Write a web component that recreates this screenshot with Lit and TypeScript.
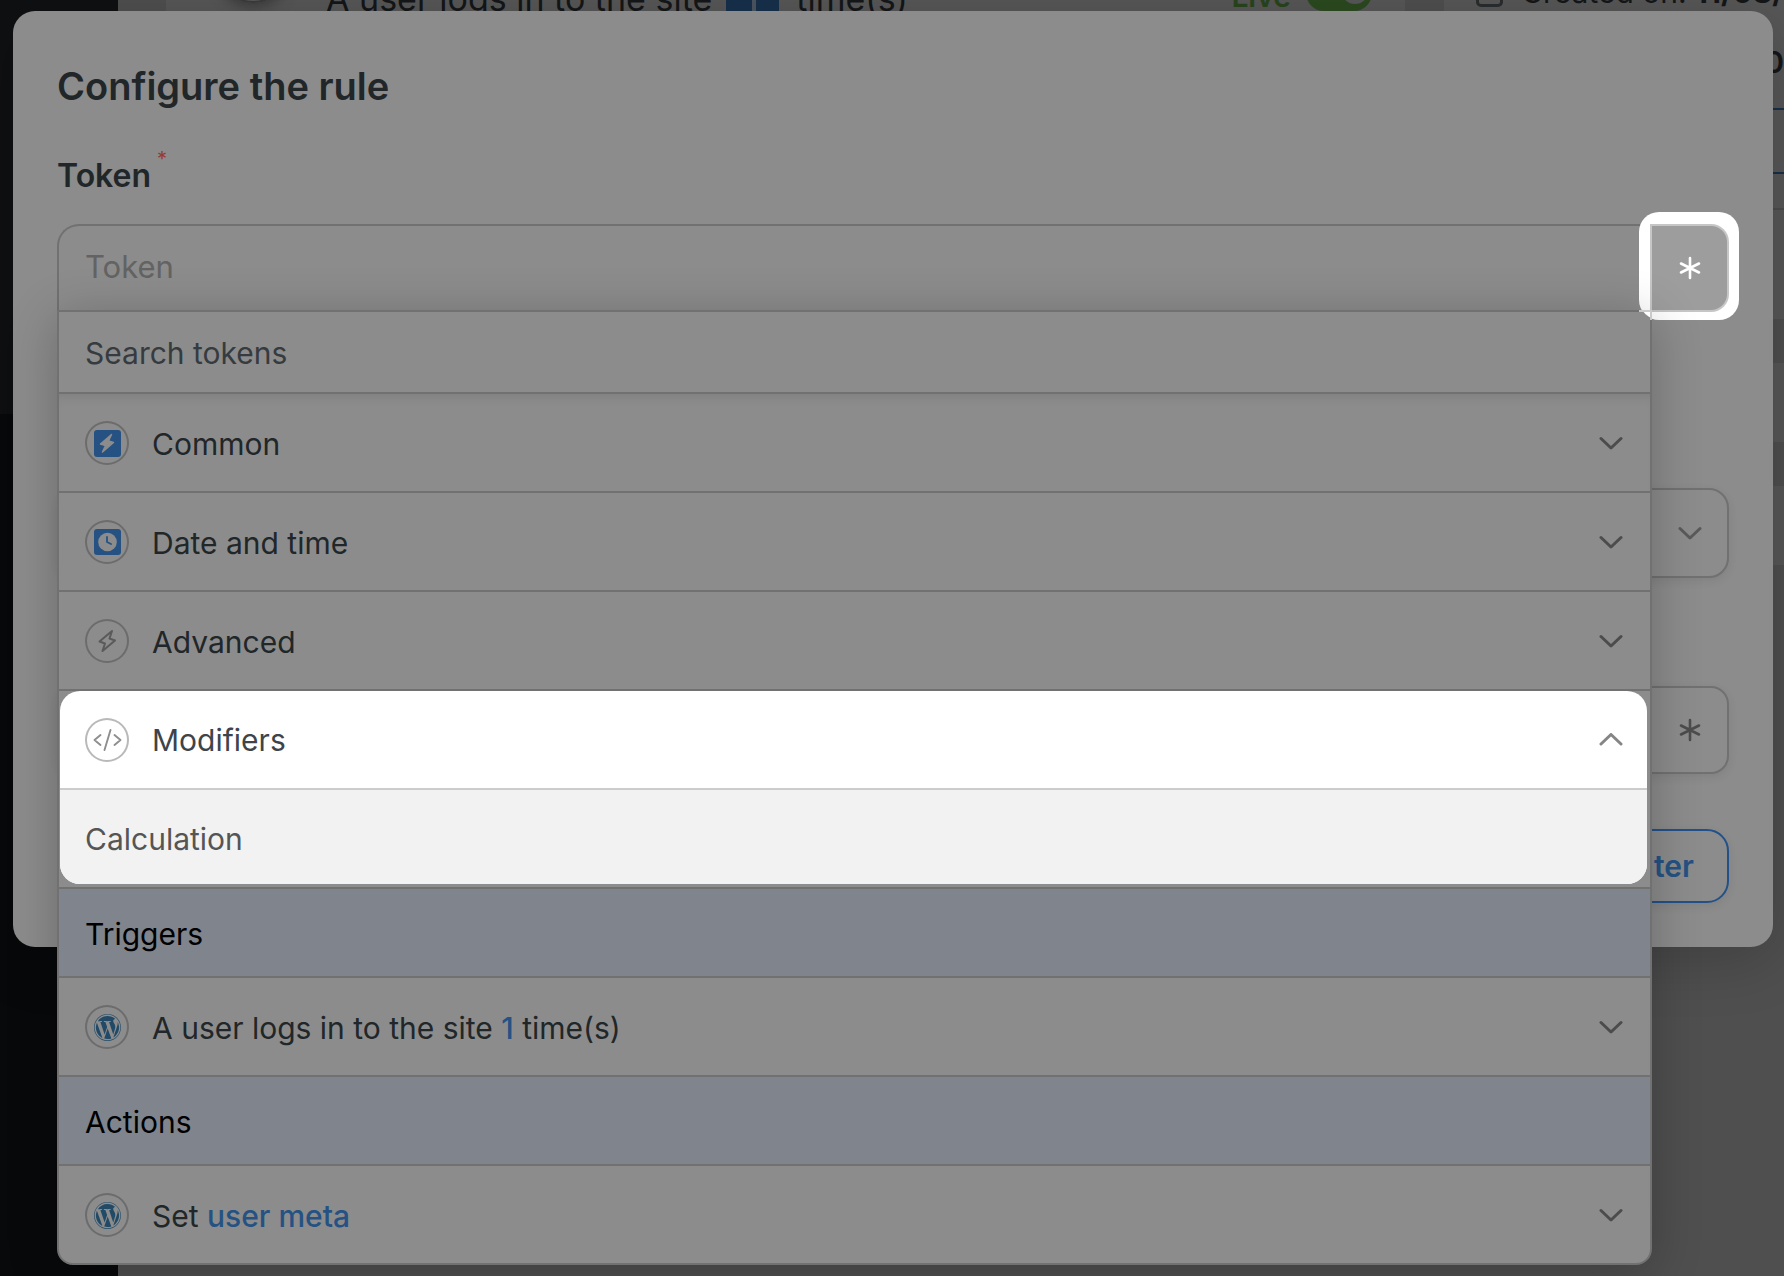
import { LitElement, html, css, svg } from "lit";
import { customElement } from "lit/decorators.js";

const chevronDown = html`<svg class="chev" viewBox="0 0 24 14" width="24" height="14" aria-hidden="true"><path d="M2 2.500 L12 12 L22 2.500" /></svg>`;
const chevronUp = html`<svg class="chev" viewBox="0 0 24 14" width="24" height="14" aria-hidden="true"><path d="M2 11 L12 1.500 L22 11" /></svg>`;
const asterisk = html`<svg class="ast" viewBox="0 0 24 24" width="24" height="24" aria-hidden="true"><path d="M12 2 V22 M3 7.500 L21 16.500 M21 7.500 L3 16.500" /></svg>`;

const icons = {
  common: svg`<rect x="9" y="9" width="27" height="27" rx="3" fill="#255283"/><path d="M26.500 13.500 L15.500 23 L20.500 24.500 L17.500 31 L28.500 21.500 L23.500 20 Z" fill="#8c8c8c" stroke="#8c8c8c" stroke-width="1.500" stroke-linejoin="round"/>`,
  date: svg`<rect x="9" y="9" width="27" height="26" rx="3" fill="#255283"/><circle cx="22.500" cy="22" r="9.300" fill="#8c8c8c"/><path d="M22 17 V22 L26 24" fill="none" stroke="#255283" stroke-width="1.800" stroke-linecap="round" stroke-linejoin="round"/>`,
  advanced: svg`<path d="M27 12 L14.500 22.500 L20 24.500 L17.500 32 L30 21.500 L24.500 19.500 Z" fill="none" stroke="#5a5a5a" stroke-width="2" stroke-linejoin="round"/>`,
  modifiers: svg`<path d="M15.500 17 L9.500 22 L15.500 27 M29.500 17 L35.500 22 L29.500 27 M25.500 12 L19.500 32" fill="none" stroke="#8e8e8e" stroke-width="1.900" stroke-linecap="round" stroke-linejoin="round"/>`,
  wordpress: svg`<g transform="translate(9 9) scale(0.220)" fill="#214a66"><path d="M8.708 61.260c0 20.802 12.089 38.779 29.619 47.298L13.258 39.872c-2.916 6.536-4.550 13.769-4.550 21.388zM96.740 58.608c0-6.495-2.333-10.993-4.334-14.494-2.664-4.329-5.161-7.995-5.161-12.324 0-4.831 3.664-9.328 8.825-9.328.233 0 .454.029.681.042-9.350-8.566-21.807-13.796-35.489-13.796-18.360 0-34.513 9.420-43.910 23.688 1.233.037 2.395.063 3.382.063 5.497 0 14.006-.667 14.006-.667 2.833-.167 3.167 3.994.337 4.329 0 0-2.847.335-6.015.501L48.200 93.547l11.501-34.493-8.188-22.434c-2.830-.166-5.511-.501-5.511-.501-2.832-.166-2.500-4.496.332-4.329 0 0 8.679.667 13.843.667 5.496 0 14.006-.667 14.006-.667 2.835-.167 3.168 3.994.337 4.329 0 0-2.853.335-6.015.501l18.992 56.494 5.242-17.517c2.272-7.269 4.001-12.490 4.001-16.989z"/><path d="M62.184 65.857l-15.768 45.819c4.708 1.384 9.687 2.141 14.846 2.141 6.120 0 11.989-1.058 17.452-2.979-.141-.225-.269-.464-.374-.724zM107.376 36.046c.226 1.674.354 3.471.354 5.404 0 5.333-.996 11.328-3.996 18.824l-16.053 46.413c15.624-9.111 26.133-26.038 26.133-45.426.001-9.137-2.333-17.729-6.438-25.215z"/><path d="M61.262 0C27.483 0 0 27.481 0 61.260c0 33.783 27.483 61.263 61.262 61.263 33.778 0 61.265-27.480 61.265-61.263C122.526 27.481 95.040 0 61.262 0zm0 119.715c-32.230 0-58.453-26.223-58.453-58.455 0-32.230 26.222-58.451 58.453-58.451 32.229 0 58.450 26.221 58.450 58.451 0 32.232-26.221 58.455-58.450 58.455z"/></g>`,
};

const icon = (name: keyof typeof icons) =>
  html`<span class="ring"><svg viewBox="0 0 44 44" width="44" height="44" aria-hidden="true">${icons[name]}</svg></span>`;

@customElement("app-root")
export class AppRoot extends LitElement {
  static styles = css`
    :host {
      display: block;
      position: relative;
      min-height: 100vh;
      overflow: hidden;
      background: #4f4f4f;
      font-family: Inter, "Liberation Sans", sans-serif;
      font-size: 30px;
      color: #212629;
    }
    * { box-sizing: border-box; }
    button, input { font: inherit; color: inherit; margin: 0; }
    button { cursor: pointer; }

    /* The recipe page, scrolled up behind the dialog */
    .backdrop {
      position: absolute;
      inset: 0;
      overflow: hidden;
      display: grid;
      grid-template-columns: 118px 1fr;
    }
    .rail { display: grid; grid-template-rows: 414px 1fr; background: #08090b; }
    .rail-top { background: #0f1012; }
    .canvas {
      display: grid;
      grid-template-columns: 1fr 340px;
      gap: 39px;
      margin-top: -70px;
      padding-left: 48px;
      align-items: start;
      white-space: nowrap;
      line-height: 34px;
      color: #141617;
    }
    .card { background: #575757; }
    .recipe {
      display: flex;
      align-items: flex-start;
      height: 389px;
      padding: 0 33px 0 51px;
      font-size: 34px;
    }
    .avatar { width: 72px; height: 72px; margin: 1px 37px 0 0; border: 2px solid #3b3b3b; border-radius: 50%; box-shadow: 0 4px 14px #3a3a3a; }
    .phrase { margin-top: 52px; }
    .count { width: 53px; height: 34px; margin: 52px 17px 0 14px; background: linear-gradient(90deg, #17304b 26px, #4c5660 26px 30px, #17304b 30px); }
    .live { margin: 49px 15px 0 auto; font-size: 30px; font-weight: 600; color: #28451d; }
    .toggle { width: 66px; height: 36px; margin-top: 45px; padding: 5px 4px; display: flex; justify-content: flex-end; border-radius: 18px; background: #2b4a1f; }
    .toggle i { width: 26px; height: 24px; border-radius: 50%; background: #575757; }
    .side { display: grid; gap: 44px; }
    .side .card { height: 79px; }
    .side .meta { height: 389px; padding: 45px 0 0 32px; overflow: hidden; }
    .created { display: flex; gap: 18px; }
    .calendar { width: 30px; height: 27px; margin-top: 5px; border: 3px solid #2a2d2f; border-radius: 5px; }
    .total { margin-top: 36px; text-align: right; font-weight: 600; }
    .outline { height: 66px; margin-top: 29px; border: solid #17304b; border-width: 2px 0; }
    .rule { height: 2px; margin-top: 34px; margin-left: -32px; background: #4c4c4c; }

    .modal {
      position: relative;
      margin: 11px 11px 0 13px;
      height: 936px;
      padding: 50px 44px 0;
      border-radius: 22px;
      background: #8c8c8c;
      box-shadow: 0 12px 60px rgba(0, 0, 0, 0.2);
    }
    h1 { margin: 0; font-size: 38px; line-height: 50px; font-weight: 600; }
    .label { display: flex; gap: 6px; margin-top: 45px; font-size: 32px; line-height: 40px; font-weight: 600; }
    .req { font-size: 20px; line-height: 24px; font-weight: 400; color: #963a35; margin-top: -9px; }

    .field { display: grid; grid-template-columns: 1fr 79px; margin-top: 28px; height: 88px; }
    .token {
      min-width: 0;
      padding: 0 26px 4px;
      border: 2px solid #717171;
      border-right: 0;
      border-radius: 22px 0 0 0;
      background: transparent;
      font-size: 31px;
      outline: none;
    }
    .token::placeholder { color: #636363; opacity: 1; }
    .pick { position: relative; }
    .glow { position: absolute; inset: -12px -10px -8px -11px; border-radius: 20px; background: #fff; }
    .pick button {
      position: relative;
      width: 100%;
      height: 100%;
      display: grid;
      place-items: center;
      border: 2px solid #c6c6c6;
      border-radius: 0 18px 18px 0;
      background: #9d9d9d;
      color: #fff;
    }
    .ast { fill: none; stroke: currentColor; stroke-width: 2.6; stroke-linecap: round; }

    .behind { display: flex; flex-direction: column; align-items: flex-end; padding-top: 176px; }
    .behind button {
      display: flex;
      align-items: center;
      justify-content: flex-end;
      border: 2px solid #717171;
      background: #8c8c8c;
      box-shadow: 0 3px 10px rgba(0, 0, 0, 0.08);
    }
    .select { width: 100%; height: 90px; padding-right: 25px; border-radius: 20px; }
    .value { width: 100%; height: 88px; margin-top: 108px; padding-right: 25px; border-radius: 18px; color: #4c4c4c; }
    .behind .save { height: 74px; margin-top: 55px; padding: 0 33px; border-color: #225189; border-radius: 22px; color: #255283; font-weight: 600; }

    .list {
      position: absolute;
      left: 44px;
      right: 121px;
      top: 299px;
      border: 2px solid #717171;
      border-radius: 0 0 16px 16px;
      background: #8c8c8c;
      box-shadow: 0 8px 50px rgba(0, 0, 0, 0.24);
    }
    /* The part of the button's highlight that falls on the list's corner */
    .glow-corner {
      position: absolute;
      top: -2px;
      right: -2px;
      width: 13px;
      height: 10px;
      border: solid #cacaca;
      border-width: 2px 2px 0 0;
      background: radial-gradient(circle at 20px -12px, #fff 19px, transparent 20px) padding-box;
      pointer-events: none;
    }
    .search { display: block; width: 100%; height: 80px; padding: 2px 26px 0; border: 0; background: transparent; color: #363b3f; outline: none; }
    .search::placeholder { color: #363b3f; opacity: 1; }
    .row {
      display: flex;
      align-items: center;
      gap: 23px;
      width: 100%;
      height: 99px;
      padding: 0 27px 0 26px;
      border: 0;
      border-top: 2px solid #717171;
      background: transparent;
      text-align: left;
    }
    .first { box-shadow: inset 0 10px 12px -8px rgba(0, 0, 0, 0.1); }
    .row .text { flex: 1; padding-top: 2px; }
    .row b { font-weight: 500; color: #255283; }
    .ring { width: 44px; height: 44px; border-radius: 50%; box-shadow: inset 0 0 0 2px #6c6c6c; }
    .ring svg { display: block; }
    .chev { fill: none; stroke: currentColor; stroke-width: 3; stroke-linecap: round; stroke-linejoin: round; color: #4c4c4c; }
    .select .chev { color: #5a5a5a; }
    h2 { margin: 0; height: 89px; padding: 0 26px; line-height: 90px; border-top: 2px solid #717171; background: #7f848d; font-size: 30px; font-weight: 400; color: #000; }
    .open { border-top: 2px solid #717171; padding: 0 3px 3px 1px; height: 198px; }
    .spot { height: 193px; overflow: hidden; border-radius: 20px; background: #fff; color: #3d444b; }
    .spot .row { height: 97px; border-top: 0; padding: 0 24px 0 25px; }
    .spot .text { padding-top: 0; }
    .spot .ring { box-shadow: inset 0 0 0 2px #b9b9b9; }
    .spot .chev { color: #858585; }
    .spot .calc { height: 99px; border-top: 2px solid #cccccc; background: #f2f2f2; color: #555; }
  `;

  private row(name: keyof typeof icons, label: unknown, extra = "") {
    return html`<button class="row ${extra}">${icon(name)}<span class="text">${label}</span>${chevronDown}</button>`;
  }

  render() {
    return html`
      <div class="backdrop">
        <div class="rail"><div class="rail-top"></div></div>
        <div class="canvas">
          <div class="card recipe">
            <span class="avatar"></span>
            <span class="phrase">A user logs in to the site</span>
            <span class="count"></span>
            <span class="phrase">time(s)</span>
            <span class="live">Live</span>
            <span class="toggle"><i></i></span>
          </div>
          <div class="side">
            <div class="card meta">
              <div class="created"><span class="calendar"></span><span>Created on: <strong>11/08/</strong></span></div>
              <div class="total">0</div>
              <div class="outline"></div>
              <div class="rule"></div>
            </div>
            <div class="card"></div>
            <div class="card"></div>
          </div>
        </div>
      </div>
      <main class="modal">
        <h1>Configure the rule</h1>
        <label class="label" for="token">Token<span class="req">*</span></label>
        <div class="field">
          <input class="token" id="token" placeholder="Token" />
          <div class="pick"><span class="glow"></span><button aria-label="Insert token">${asterisk}</button></div>
        </div>
        <div class="behind">
          <button class="select" aria-label="Condition">${chevronDown}</button>
          <button class="value" aria-label="Insert value token">${asterisk}</button>
          <button class="save">Save filter</button>
        </div>
        <section class="list">
          <span class="glow-corner"></span>
          <input class="search" aria-label="Search tokens" placeholder="Search tokens" />
          ${this.row("common", "Common", "first")}
          ${this.row("date", "Date and time")}
          ${this.row("advanced", "Advanced")}
          <div class="open">
            <div class="spot">
              <button class="row">${icon("modifiers")}<span class="text">Modifiers</span>${chevronUp}</button>
              <button class="row calc"><span class="text">Calculation</span></button>
            </div>
          </div>
          <h2>Triggers</h2>
          ${this.row("wordpress", html`A user logs in to the site <b>1</b> time(s)`)}
          <h2>Actions</h2>
          ${this.row("wordpress", html`Set <b>user meta</b>`)}
        </section>
      </main>
    `;
  }
}
